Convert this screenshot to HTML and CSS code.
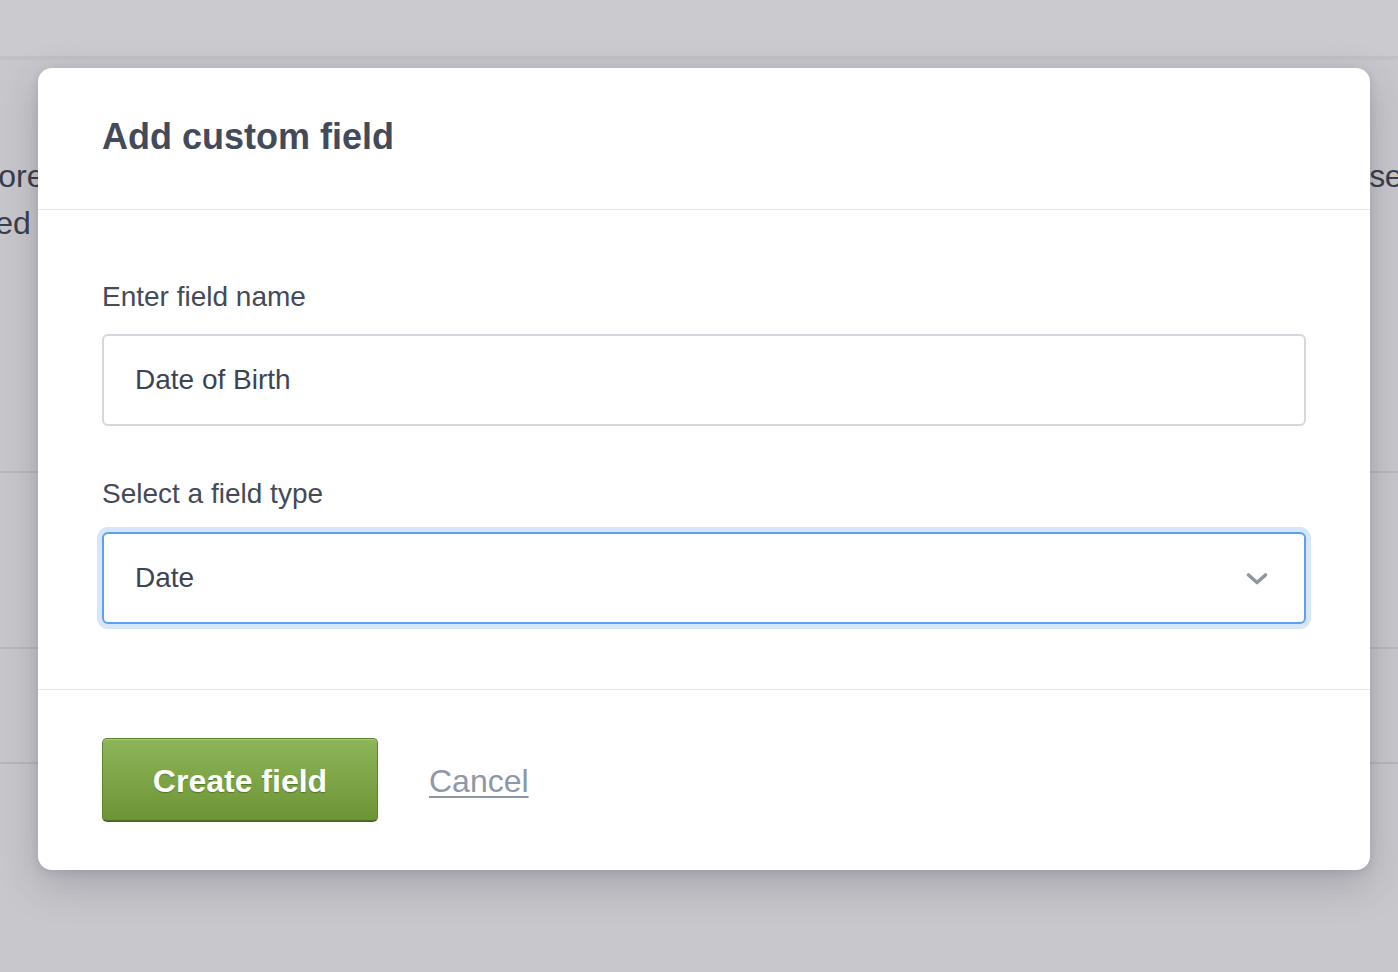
FILE: index.html
```html
<!DOCTYPE html>
<html lang="en">
<head>
<meta charset="utf-8">
<title>Add custom field</title>
<link rel="stylesheet" href="styles.css">
</head>
<body>
<div class="page">
  <div class="topbar"></div>
  <div class="content">
    <div class="intro">
      <p class="bg-text left">Explore</p>
      <p class="bg-text right">segments</p>
    </div>
    <p class="bg-text left second">Saved custom</p>
    <div class="rows">
      <div class="row r1"></div>
      <div class="row r2"></div>
      <div class="row r3"></div>
    </div>
  </div>
</div>

<div class="modal" role="dialog" aria-labelledby="modal-title">
  <div class="modal-header">
    <h1 id="modal-title" class="modal-title">Add custom field</h1>
  </div>
  <div class="modal-body">
    <div class="field">
      <label class="field-label" for="field-name">Enter field name</label>
      <input id="field-name" class="text-input" type="text" value="Date of Birth">
    </div>
    <div class="field field-second">
      <div class="field-label">Select a field type</div>
      <div class="select focused">
        <span class="select-value">Date</span>
        <svg class="chevron" width="24" height="16" viewBox="0 0 24 16" aria-hidden="true">
          <path d="M3.5 4 L12 11.5 L20.5 4" fill="none" stroke="#8e96a5" stroke-width="3.6" stroke-linecap="round" stroke-linejoin="round"/>
        </svg>
      </div>
    </div>
  </div>
  <div class="modal-footer">
    <button class="btn-primary" type="button">Create field</button>
    <a class="link-cancel" href="#">Cancel</a>
  </div>
</div>
</body>
</html>
```

FILE: styles.css
```css
* { box-sizing: border-box; }

html, body {
  margin: 0;
  padding: 0;
}

body {
  width: 1398px;
  height: 972px;
  overflow: hidden;
  background: #c8c7cc;
  font-family: "Liberation Sans", Arial, Helvetica, sans-serif;
  color: #434a58;
  position: relative;
}

.page {
  height: 972px;
  overflow: hidden;
}

.topbar {
  height: 57px;
  background: #cbcacf;
  border-bottom: 1px solid #c1c0c5;
  box-shadow: 0 2px 3px rgba(0, 0, 0, 0.05);
}

.content {
  padding-top: 103px;
}

.intro {
  display: flex;
  justify-content: space-between;
  height: 32px;
}

.bg-text {
  margin: 0;
  font-size: 32px;
  line-height: 32px;
  color: #393e4b;
  white-space: nowrap;
}

.bg-text.left {
  margin-left: -64px;
}

.bg-text.right {
  margin-right: -106px;
  letter-spacing: -0.5px;
}

.bg-text.second {
  margin-top: 15px;
  margin-left: -60px;
}

.rows {
  margin-top: 232px;
}

.row {
  border-top: 2px solid #b9b8be;
}

.r1 { height: 176px; }
.r2 { height: 115px; }
.r3 { height: 100px; }

/* modal */
.modal {
  position: absolute;
  left: 38px;
  top: 68px;
  width: 1332px;
  height: 802px;
  background: #ffffff;
  border-radius: 14px;
  box-shadow: 0 14px 40px rgba(40, 40, 60, 0.22), 0 2px 10px rgba(40, 40, 60, 0.12);
  display: flex;
  flex-direction: column;
}

.modal-header {
  padding: 47px 64px 50px;
  border-bottom: 1px solid #e7e7ec;
}

.modal-title {
  margin: 0;
  font-size: 36px;
  line-height: 44px;
  font-weight: 700;
  color: #434a5a;
}

.modal-body {
  padding: 69px 64px 65px;
}

.field {
  display: flex;
  flex-direction: column;
}

.field-second {
  margin-top: 50px;
}

.field-label {
  font-size: 28px;
  line-height: 36px;
  color: #434a58;
  margin-bottom: 19px;
}

.field-second .field-label {
  margin-bottom: 20px;
}

.text-input {
  width: 100%;
  height: 92px;
  margin: 0;
  border: 2px solid #d4d7dd;
  border-radius: 6px;
  padding: 0 31px;
  font-family: inherit;
  font-size: 28px;
  color: #3c4454;
  background: #ffffff;
  outline: none;
}

.select {
  height: 92px;
  border: 2px solid #5e9ff0;
  border-radius: 6px;
  padding: 0 35px 0 31px;
  display: flex;
  align-items: center;
  justify-content: space-between;
  background: #ffffff;
}

.select.focused {
  box-shadow: 0 0 0 5px #d6e6fb;
}

.select-value {
  font-size: 28px;
  color: #3c4454;
}

.chevron {
  display: block;
  margin-top: 2px;
}

.modal-footer {
  border-top: 1px solid #e7e7ec;
  padding: 48px 64px;
  display: flex;
  align-items: center;
  gap: 51px;
}

.btn-primary {
  width: 276px;
  height: 84px;
  margin: 0;
  padding: 3px 0 0;
  border: 1px solid #5d8530;
  border-bottom-color: #4a6b22;
  border-bottom-width: 2px;
  border-radius: 5px;
  background: linear-gradient(#8db559, #6d9535);
  box-shadow: inset 0 1px 0 rgba(255, 255, 255, 0.25);
  color: #ffffff;
  font-family: inherit;
  font-size: 32px;
  font-weight: 700;
  text-shadow: 0 1px 1px rgba(40, 60, 10, 0.45);
  cursor: pointer;
}

.link-cancel {
  font-size: 32px;
  color: #8e97a9;
  text-decoration: underline;
  text-decoration-thickness: 2px;
  text-underline-offset: 4px;
  margin-top: 2px;
}
```
